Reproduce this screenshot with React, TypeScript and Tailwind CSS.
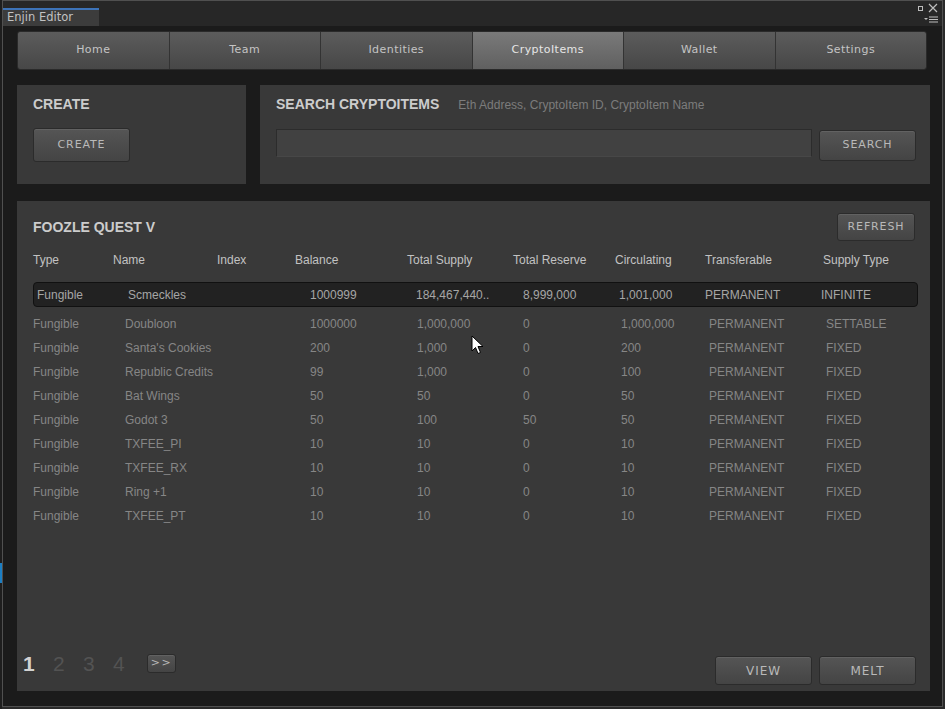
import React from "react";

const tabs = ["Home", "Team", "Identities", "CryptoItems", "Wallet", "Settings"];

const rows = [
  ["Fungible", "Doubloon", "1000000", "1,000,000", "0", "1,000,000", "PERMANENT", "SETTABLE"],
  ["Fungible", "Santa's Cookies", "200", "1,000", "0", "200", "PERMANENT", "FIXED"],
  ["Fungible", "Republic Credits", "99", "1,000", "0", "100", "PERMANENT", "FIXED"],
  ["Fungible", "Bat Wings", "50", "50", "0", "50", "PERMANENT", "FIXED"],
  ["Fungible", "Godot 3", "50", "100", "50", "50", "PERMANENT", "FIXED"],
  ["Fungible", "TXFEE_PI", "10", "10", "0", "10", "PERMANENT", "FIXED"],
  ["Fungible", "TXFEE_RX", "10", "10", "0", "10", "PERMANENT", "FIXED"],
  ["Fungible", "Ring +1", "10", "10", "0", "10", "PERMANENT", "FIXED"],
  ["Fungible", "TXFEE_PT", "10", "10", "0", "10", "PERMANENT", "FIXED"],
];

const btn =
  "flex items-center justify-center rounded-[3px] border border-[#2b2b2b] bg-linear-to-b from-[#555555] to-[#444444] text-[11px] tracking-[0.08em] text-[#b9b9b9] shadow-[inset_0_1px_0_rgba(255,255,255,0.08)] font-['DejaVu_Sans',sans-serif]";

function Cursor() {
  return (
    <svg className="absolute left-[471px] top-[335px]" width="14" height="20" viewBox="0 0 14 20">
      <path d="M1 1 L1 16 L4.5 12.5 L7 18.5 L9.5 17.5 L7 11.5 L12 11.5 Z" fill="#fff" stroke="#000" strokeWidth="1" />
    </svg>
  );
}

export default function App() {
  return (
    <div className="relative flex h-[709px] w-[945px] overflow-hidden bg-[#2a2a2a] font-['Liberation_Sans',Arial,sans-serif]">
      {/* left editor strip */}
      <div className="flex w-[2px] flex-col bg-[#1e1e1e]">
        <div className="h-[563px]" />
        <div className="h-[20px] bg-[#1c7fc4]" />
      </div>

      <div className="mb-[2px] flex flex-1 flex-col border border-[#505050] bg-[#1b1b1b]">
        {/* window header */}
        <div className="relative flex h-[25px] items-end bg-[#272727]">
          <div className="flex h-[18px] w-[96px] items-center border-t-2 border-[#3d73b8] bg-[#3c3c3c] pl-[4px] text-[11.5px] text-[#c2c2c2] font-['DejaVu_Sans',sans-serif]">
            Enjin Editor
          </div>
          <div className="absolute right-[4px] top-[2px] flex flex-col items-end gap-[3px]">
            <div className="flex items-center gap-[5px]">
              <div className="h-[5px] w-[5px] border-[1.5px] border-[#bdbdbd]" />
              <svg width="10" height="10" viewBox="0 0 10 10">
                <path d="M1 1 L9 9 M9 1 L1 9" stroke="#bdbdbd" strokeWidth="1.2" />
              </svg>
            </div>
            <svg width="14" height="7" viewBox="0 0 14 7">
              <path d="M0 2 L4 2 L2 4 Z" fill="#bdbdbd" />
              <path d="M5 1 H14 M5 3.5 H14 M5 6 H14" stroke="#bdbdbd" strokeWidth="1.2" />
            </svg>
          </div>
        </div>

        <div className="flex flex-1 flex-col pl-[14px] pr-[12px]">
          {/* tab bar */}
          <div className="mr-[3px] mt-[5px] flex h-[39px] overflow-hidden rounded-[3px] border border-[#2a2a2a]">
            {tabs.map((t, i) => (
              <div
                key={t}
                className={
                  "flex flex-1 items-center justify-center text-[11px] tracking-[0.04em] font-['DejaVu_Sans',sans-serif] " +
                  (i > 0 ? "border-l border-[#333333] " : "") +
                  (t === "CryptoItems"
                    ? "bg-linear-to-b from-[#7a7a7a] to-[#606060] text-[#e6e6e6]"
                    : "bg-linear-to-b from-[#5c5c5c] to-[#474747] text-[#c4c4c4]")
                }
              >
                {t}
              </div>
            ))}
          </div>

          {/* create + search */}
          <div className="mt-[15px] flex h-[99px] gap-[14px]">
            <div className="w-[229px] bg-[#393939] px-[16px] pt-[9px]">
              <div className="text-[14px] font-bold text-[#cccccc]">CREATE</div>
              <div className={btn + " mt-[13px] h-[34px] w-[97px]"}>CREATE</div>
            </div>
            <div className="flex-1 bg-[#393939] pl-[16px] pr-[14px] pt-[9px]">
              <div className="flex items-baseline gap-[19px]">
                <span className="text-[14px] font-bold text-[#cccccc]">SEARCH CRYPTOITEMS</span>
                <span className="text-[12px] text-[#7c7c7c]">Eth Address, CryptoItem ID, CryptoItem Name</span>
              </div>
              <div className="mt-[13px] flex items-start gap-[7px]">
                <div className="mt-[1px] h-[28px] flex-1 border border-[#2c2c2c] border-b-[#474747] bg-[#414141]" />
                <div className={btn + " mt-[2px] h-[31px] w-[97px]"}>SEARCH</div>
              </div>
            </div>
          </div>

          {/* items panel */}
          <div className="mb-[15px] mt-[17px] flex flex-1 flex-col bg-[#393939]">
            <div className="mt-[12px] flex h-[28px] items-center justify-between pl-[16px] pr-[15px]">
              <span className="text-[14px] font-bold text-[#cccccc]">FOOZLE QUEST V</span>
              <div className={btn + " h-[28px] w-[78px]"}>REFRESH</div>
            </div>

            <div className="mt-[9px] grid h-[20px] grid-cols-[80px_104px_78px_112px_106px_102px_90px_118px_1fr] items-center pl-[16px] text-[12px] text-[#c2c2c2]">
              <span>Type</span>
              <span>Name</span>
              <span>Index</span>
              <span>Balance</span>
              <span>Total Supply</span>
              <span>Total Reserve</span>
              <span>Circulating</span>
              <span>Transferable</span>
              <span>Supply Type</span>
            </div>

            <div className="ml-[16px] mr-[12px] mt-[12px] grid h-[25px] grid-cols-[91px_182px_106px_107px_96px_86px_116px_1fr] items-center rounded-[4px] border border-[#111111] bg-[#222222] pl-[3px] text-[12px] text-[#a6a6a6]">
              <span>Fungible</span>
              <span>Scmeckles</span>
              <span>1000999</span>
              <span>184,467,440..</span>
              <span>8,999,000</span>
              <span>1,001,000</span>
              <span>PERMANENT</span>
              <span>INFINITE</span>
            </div>

            <div className="mt-[5px] flex flex-col">
              {rows.map((r) => (
                <div
                  key={r[1]}
                  className="grid h-[24px] grid-cols-[92px_185px_107px_106px_98px_88px_117px_1fr] items-center pl-[16px] text-[12px] text-[#868686]"
                >
                  {r.map((c, j) => (
                    <span key={j}>{c}</span>
                  ))}
                </div>
              ))}
            </div>

            <div className="mt-auto flex items-end justify-between pb-[6px] pl-[6px] pr-[14px]">
              <div className="mb-[11px] flex items-center">
                <span className="w-[30px] text-[21px] font-bold leading-none text-[#d2d2d2]">1</span>
                <span className="w-[30px] text-[21px] leading-none text-[#535353]">2</span>
                <span className="w-[30px] text-[21px] leading-none text-[#535353]">3</span>
                <span className="w-[30px] text-[21px] leading-none text-[#535353]">4</span>
                <div className={btn + " ml-[4px] h-[19px] w-[29px] text-[10px] tracking-[0.15em]"}>&gt;&gt;</div>
              </div>
              <div className="flex gap-[7px]">
                <div className={btn + " h-[29px] w-[97px] text-[12px]"}>VIEW</div>
                <div className={btn + " h-[29px] w-[97px] text-[12px]"}>MELT</div>
              </div>
            </div>
          </div>
        </div>
      </div>
      <div className="w-[2px] bg-[#2a2a2a]" />
      <Cursor />
    </div>
  );
}
